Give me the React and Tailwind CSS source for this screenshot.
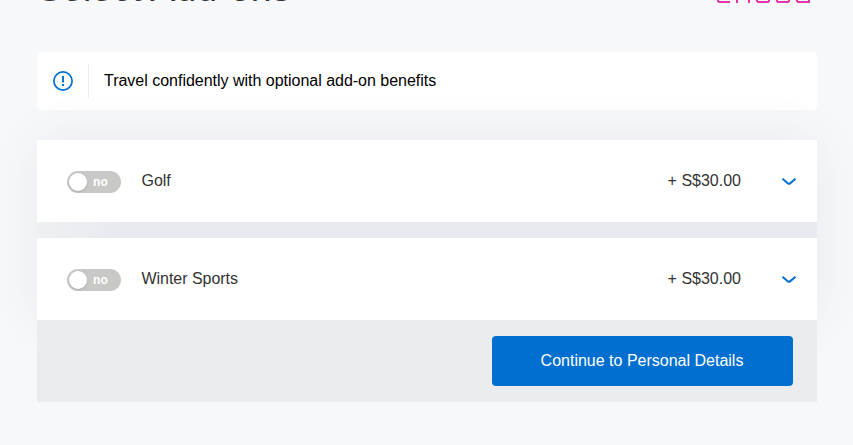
import React from 'react';

const Chevron = () => (
  <svg className="mt-px" width="16" height="10" viewBox="0 0 16 10" fill="none" stroke="#006fcf" strokeWidth="2" aria-hidden="true">
    <path d="M1.5 1.8 L7 6.4 Q8 7.2 9 6.4 L14.5 1.8" />
  </svg>
);

const AddonCard = ({ name, price }) => {
  return (
    <div className="flex h-[82px] items-center bg-white pl-[30px] pr-5 text-base text-[#333]">
      <button
        className="mt-[2px] flex h-[22px] w-[54px] items-center rounded-full bg-[#c8c8c7] pl-[2px]"
        aria-label={`Add ${name}`}
      >
        <span className="h-[18px] w-[18px] rounded-full bg-white shadow-sm" />
        <span className="ml-[6px] text-[12px] leading-none font-bold tracking-[0.2px] text-white">no</span>
      </button>
      <span className="ml-[20.5px] grow tracking-[-0.04px]">{name}</span>
      <span className="mr-10">{price}</span>
      <Chevron />
    </div>
  );
};

const App = () => {
  return (
    <div className="h-[445px] overflow-hidden bg-[#f7f8fa] px-9 font-['Liberation_Sans',Arial,sans-serif]">
      <div className="ml-px w-[780px]">
        <header className="flex h-[52px] items-start justify-between">
          <h1 className="-mt-[32px] text-[37.5px] leading-[40px] tracking-[0.1px] text-[#333]">Select Add-ons</h1>
          <svg className="mr-[4px]" width="96" height="4" viewBox="0 0 96 4" fill="none" stroke="#e535ab" strokeWidth="2" aria-hidden="true">
            <path d="M1 0V1L2 2H13M20 0V3M32 0V3M40 0V1L41 2H51L52 1V0M60 0V1L61 2H71L72 1V0M80 0V1L81 2H92V0" />
          </svg>
        </header>

        <div className="flex h-[58px] items-center rounded bg-white">
          <svg className="ml-4" width="20" height="20" viewBox="0 0 20 20" fill="none" stroke="#006fcf" aria-hidden="true">
            <circle cx="10" cy="10" r="9.1" strokeWidth="1.7" />
            <path d="M10 5V11.5M10 13V15" strokeWidth="1.9" />
          </svg>
          <p className="ml-[15px] flex h-[34px] items-center border-l border-[#ecedee] pl-[15px] text-base tracking-[-0.015px] text-black">
            Travel confidently with optional add-on benefits
          </p>
        </div>

        <main className="mt-[30px] flex flex-col gap-4 bg-linear-to-r from-[#eef0f3] via-[#e7ebef] via-10% to-[#e7ebef] to-90% shadow-[0_0_48px_rgba(40,80,100,0.08)]">
          <AddonCard name="Golf" price="+ S$30.00" />
          <AddonCard name="Winter Sports" price="+ S$30.00" />
        </main>

        <footer className="relative flex h-[82px] items-center justify-end bg-[#ebecee] pr-6">
          <button className="h-[50px] w-[301px] rounded bg-[#006fcf] pr-px text-base text-white">
            Continue to Personal Details
          </button>
        </footer>
      </div>
    </div>
  );
};

export default App;
